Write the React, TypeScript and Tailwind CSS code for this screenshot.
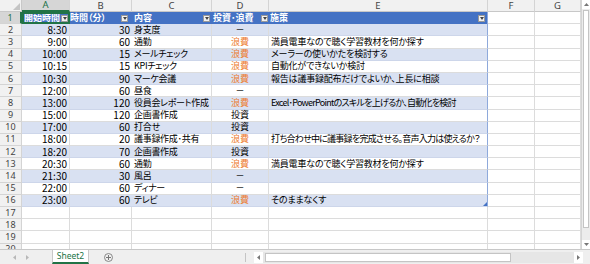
import React from "react";

type Row = [string, string, string, string, string];

const rows: Row[] = [
  ["8:30", "30", "身支度", "－", ""],
  ["9:00", "60", "通勤", "浪費", "満員電車なので聴く学習教材を何か探す"],
  ["10:00", "15", "メールチェック", "浪費", "メーラーの使いかたを検討する"],
  ["10:15", "15", "KPIチェック", "浪費", "自動化ができないか検討"],
  ["10:30", "90", "マーケ会議", "浪費", "報告は議事録配布だけでよいか、上長に相談"],
  ["12:00", "60", "昼食", "－", ""],
  ["13:00", "120", "役員会レポート作成", "浪費", "Excel･PowerPointのスキルを上げるか、自動化を検討"],
  ["15:00", "120", "企画書作成", "投資", ""],
  ["17:00", "60", "打合せ", "投資", ""],
  ["18:00", "20", "議事録作成･共有", "浪費", "打ち合わせ中に議事録を完成させる。音声入力は使えるか？"],
  ["18:20", "70", "企画書作成", "投資", ""],
  ["20:30", "60", "通勤", "浪費", "満員電車なので聴く学習教材を何か探す"],
  ["21:30", "30", "風呂", "－", ""],
  ["22:00", "60", "ディナー", "－", ""],
  ["23:00", "60", "テレビ", "浪費", "そのままなくす"],
];

const cols = ["A", "B", "C", "D", "E", "F", "G"];
const font = { fontFamily: '"Noto Sans CJK JP", "Noto Sans", sans-serif' };

const FilterBtn = () => (
  <span className="ml-auto flex h-[7px] w-[7px] shrink-0 items-center justify-center border border-[#9a9a9a] bg-[#f2f2f2]">
    <svg width="4" height="3" viewBox="0 0 4 3">
      <path d="M0 0h4L2 3z" fill="#444" />
    </svg>
  </span>
);

const RowHeader = ({ n, active }: { n: number; active?: boolean }) => (
  <div
    className={`flex items-center justify-center border-b border-r border-[#d4d4d4] text-[9px] ${
      active ? "border-r-2 border-r-[#217346] bg-[#d6d6d6] text-[#217346]" : "bg-[#f1f1f1] text-[#444]"
    }`}
    style={{ fontFamily: '"Noto Sans", sans-serif' }}
  >
    {n}
  </div>
);

const Blank = () => <div className="border-b border-r border-[#dcdcdc] bg-white" />;

const head = "flex items-center whitespace-nowrap bg-[#4472c4] font-bold text-white";

export default function App() {
  return (
    <div
      className="flex h-[264px] w-[590px] flex-col overflow-hidden bg-white text-black [font-feature-settings:'palt']"
      style={font}
    >
      <div className="flex h-[249px]">
        <div className="h-full overflow-hidden">
          <div className="grid grid-cols-[22px_48px_62px_80px_57px_219px_47px_46px] grid-rows-[12px_repeat(20,12.2px)] text-[9px] leading-[12px]">
            {/* corner */}
            <div className="relative border-b border-r border-[#c8c8c8] bg-[#f1f1f1]">
              <svg className="absolute bottom-[1px] right-[1px]" width="7" height="7" viewBox="0 0 7 7">
                <path d="M7 0v7H0z" fill="#c4c4c4" />
              </svg>
            </div>
            {cols.map((c, i) => (
              <div
                key={c}
                className={`flex items-center justify-center border-r border-[#d4d4d4] text-[9.5px] ${
                  i === 0
                    ? "border-b-2 border-b-[#217346] bg-[#d6d6d6] text-[#217346]"
                    : "border-b border-b-[#c8c8c8] bg-[#f1f1f1] text-[#444]"
                }`}
                style={{ fontFamily: '"Noto Sans", sans-serif' }}
              >
                {c}
              </div>
            ))}

            {/* row 1: table header */}
            <RowHeader n={1} active />
            <div className={`${head} relative pl-[2px] pr-[2px]`}>
              <span>開始時間</span>
              <FilterBtn />
              <span className="pointer-events-none absolute inset-0 border-2 border-[#217346]" />
            </div>
            <div className={`${head} pr-[4px]`}>
              <span>時間（分）</span>
              <FilterBtn />
            </div>
            <div className={`${head} pl-[2px] pr-[2px]`}>
              <span>内容</span>
              <FilterBtn />
            </div>
            <div className={`${head} pl-[1px] pr-[1px]`}>
              <span>投資･浪費</span>
              <FilterBtn />
            </div>
            <div className={`${head} border-r border-[#8ea9db] pl-[1px] pr-[2px]`}>
              <span>施策</span>
              <FilterBtn />
            </div>
            <Blank />
            <Blank />

            {rows.map((r, i) => {
              const band = i % 2 === 0;
              const last = i === rows.length - 1;
              const long = r[4].length > 25;
              const cell = `flex items-center whitespace-nowrap ${
                band ? "bg-[#d9e1f2] border-b border-b-[#cdd6ea]" : "bg-white border-b border-b-[#dcdcdc]"
              } ${last ? "border-b-[#8ea9db]" : ""}`;
              return (
                <React.Fragment key={i}>
                  <RowHeader n={i + 2} />
                  <div className={`${cell} justify-end border-r border-r-[#dcdcdc] pr-[2px] text-[10px]`}>{r[0]}</div>
                  <div className={`${cell} justify-end pr-[2px] text-[10px]`}>{r[1]}</div>
                  <div className={`${cell} z-10 border-r border-r-[#dcdcdc] pl-[2px] tracking-[-0.3px]`}>{r[2]}</div>
                  <div
                    className={`${cell} justify-center border-r border-r-[#dcdcdc] ${
                      r[3] === "浪費" ? "text-[#ed7d31]" : "text-black"
                    }`}
                  >
                    {r[3]}
                  </div>
                  <div
                    className={`${cell} relative z-10 border-r border-r-[#8ea9db] pl-[2px] ${
                      long ? "tracking-[-0.75px]" : "tracking-[-0.2px]"
                    }`}
                  >
                    {r[4]}
                    {last && (
                      <svg className="absolute bottom-0 right-0" width="4" height="4" viewBox="0 0 4 4">
                        <path d="M4 0v4H0z" fill="#4472c4" />
                      </svg>
                    )}
                  </div>
                  <Blank />
                  <Blank />
                </React.Fragment>
              );
            })}

            {[17, 18, 19, 20].map(n => (
              <React.Fragment key={n}>
                <RowHeader n={n} />
                {cols.map(c => (
                  <Blank key={c} />
                ))}
              </React.Fragment>
            ))}
          </div>
        </div>

        {/* vertical scrollbar */}
        <div className="flex w-[9px] shrink-0 flex-col border-l border-[#d4d4d4] bg-[#ececec]">
          <div className="flex h-[9px] items-center justify-center bg-white">
            <svg width="5" height="3" viewBox="0 0 5 3">
              <path d="M0 3h5L2.5 0z" fill="#777" />
            </svg>
          </div>
          <div className="mx-[1px] mt-[1px] h-[218px] border border-[#c4c4c4] bg-white" />
          <div className="flex-1" />
          <div className="flex h-[9px] items-center justify-center bg-white">
            <svg width="5" height="3" viewBox="0 0 5 3">
              <path d="M0 0h5L2.5 3z" fill="#777" />
            </svg>
          </div>
        </div>
      </div>

      {/* sheet tab bar */}
      <div className="flex h-[15px] items-center border-t border-[#c8c8c8] bg-[#efefef]">
        <div className="flex w-[52px] items-center gap-[10px] pl-[13px]">
          <svg width="3" height="5" viewBox="0 0 3 5">
            <path d="M3 0v5L0 2.5z" fill="#b8b8b8" />
          </svg>
          <svg width="3" height="5" viewBox="0 0 3 5">
            <path d="M0 0v5l3-2.5z" fill="#b8b8b8" />
          </svg>
        </div>
        <div
          className="flex h-full w-[37px] items-center justify-center border-x border-b-2 border-[#c8c8c8] border-b-[#217346] bg-white text-[8.5px] text-[#217346]"
          style={{ fontFamily: '"Noto Sans", sans-serif' }}
        >
          Sheet2
        </div>
        <div className="ml-[15px] flex h-[9px] w-[9px] items-center justify-center rounded-full border border-[#888]">
          <svg width="5" height="5" viewBox="0 0 5 5">
            <path d="M2.5 0v5M0 2.5h5" stroke="#777" strokeWidth="1" />
          </svg>
        </div>
        <div className="ml-[132px] h-[9px] w-px bg-[#c4c4c4]" />
        <div className="ml-[8px] flex h-[11px] w-[329px] items-center bg-[#e6e6e6]">
          <div className="flex h-full w-[9px] items-center justify-center bg-white">
            <svg width="3" height="5" viewBox="0 0 3 5">
              <path d="M3 0v5L0 2.5z" fill="#777" />
            </svg>
          </div>
          <div className="ml-[2px] h-[9px] w-[246px] border border-[#c4c4c4] bg-white" />
          <div className="flex-1" />
          <div className="flex h-full w-[9px] items-center justify-center bg-white">
            <svg width="3" height="5" viewBox="0 0 3 5">
              <path d="M0 0v5l3-2.5z" fill="#777" />
            </svg>
          </div>
        </div>
      </div>
    </div>
  );
}
